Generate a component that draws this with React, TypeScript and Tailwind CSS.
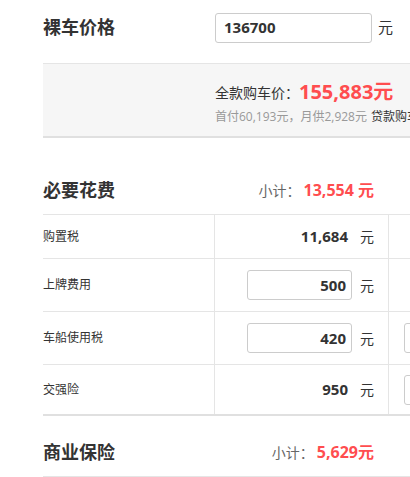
import React from "react";

const font = { fontFamily: "'Open Sans', 'Noto Sans CJK SC', sans-serif" };

type Row = {
  label: string;
  value: string;
  input: boolean;
  extra: boolean;
  h: string;
};

const rows: Row[] = [
  { label: "购置税", value: "11,684", input: false, extra: false, h: "h-[44px]" },
  { label: "上牌费用", value: "500", input: true, extra: false, h: "h-[53px]" },
  { label: "车船使用税", value: "420", input: true, extra: true, h: "h-[53px]" },
  { label: "交强险", value: "950", input: false, extra: true, h: "h-[50px]" },
];

function SectionHead({ title, total }: { title: string; total: string }) {
  return (
    <div className="flex items-center justify-between h-[48px] w-[345px] pr-[14px]">
      <div className="text-[18px] font-bold text-[#333]">{title}</div>
      <div className="flex items-center text-[14px]">
        <span className="text-[#666]">小计：</span>
        <span className="ml-[3px] text-[16px] font-bold text-[#ff4d4f]">{total}</span>
      </div>
    </div>
  );
}

export default function App() {
  return (
    <div className="w-[410px] h-[477px] overflow-hidden bg-white" style={font}>
      <div className="w-[620px] pl-[43px]">
        {/* 裸车价格 */}
        <div className="flex items-center h-[55px]">
          <div className="w-[172px] text-[18px] font-bold text-[#333]">裸车价格</div>
          <div className="w-[157px] h-[30px] border border-[#ccc] rounded-[3px] flex items-center px-[8px] text-[15px] font-bold text-[#333]">
            136700
          </div>
          <span className="ml-[6px] text-[15px] text-[#333]">元</span>
        </div>

        {/* 全款购车价 */}
        <div className="mt-[8px] h-[75px] bg-[#f6f6f6] border-t border-[#e5e5e5] border-b-2 border-b-[#e0e0e0] pl-[172px] pt-[15px]">
          <div className="flex items-center h-[26px] whitespace-nowrap">
            <span className="text-[14px] text-[#333]">全款购车价：</span>
            <span className="text-[20px] font-bold text-[#ff4d4f]">155,883元</span>
          </div>
          <div className="mt-[3px] text-[12px] leading-[18px] whitespace-nowrap">
            <span className="text-[#999]">首付60,193元，月供2,928元</span>
            <span className="ml-[4px] text-[#333]">贷款购车计算</span>
          </div>
        </div>

        {/* 必要花费 */}
        <div className="mt-[28px]">
          <SectionHead title="必要花费" total="13,554 元" />
        </div>
        <div className="border-b-2 border-[#e0e0e0]">
          {rows.map((r) => (
            <div key={r.label} className={`grid grid-cols-[171px_174px_1fr] border-t border-[#e5e5e5] ${r.h}`}>
              <div className="flex items-center text-[12px] text-[#333]">{r.label}</div>
              <div className="flex items-center justify-end border-l border-[#e5e5e5] pr-[14px]">
                {r.input ? (
                  <div className="w-[105px] h-[30px] border border-[#ccc] rounded-[3px] flex items-center justify-end pr-[5px] text-[15px] font-bold text-[#333]">
                    {r.value}
                  </div>
                ) : (
                  <span className="pr-[4px] text-[15px] font-bold text-[#333]">{r.value}</span>
                )}
                <span className="ml-[8px] text-[14px] text-[#333]">元</span>
              </div>
              <div className="flex items-center border-l border-[#e5e5e5] pl-[15px]">
                {r.extra && <div className="w-[105px] h-[30px] border border-[#ccc] rounded-[3px]" />}
              </div>
            </div>
          ))}
        </div>

        {/* 商业保险 */}
        <div className="mt-[12px]">
          <SectionHead title="商业保险" total="5,629元" />
        </div>
        <div className="border-t border-[#e5e5e5] h-[20px]" />
      </div>
    </div>
  );
}
